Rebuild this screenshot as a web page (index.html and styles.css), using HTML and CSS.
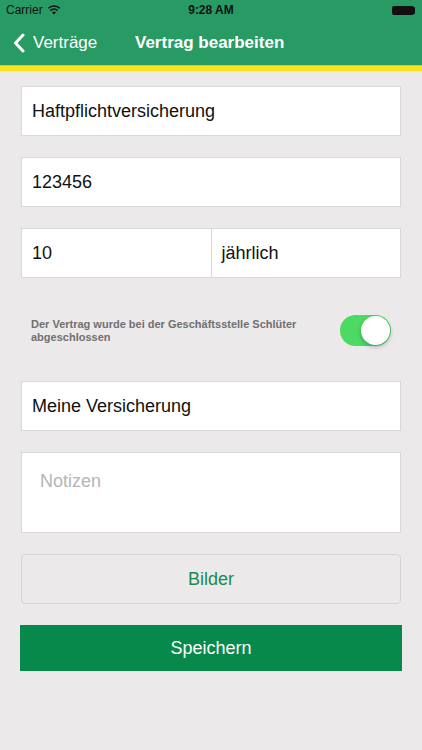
FILE: index.html
```html
<!DOCTYPE html>
<html lang="de">
<head>
  <meta charset="UTF-8">
  <title>Vertrag bearbeiten</title>
  <meta name="viewport" content="width=device-width, initial-scale=1">
  <link rel="stylesheet" href="styles.css">
</head>
<body>

<div class="header">
  <div class="statusbar">
    <div class="carrier">Carrier
      <svg class="wifi" width="14" height="10" viewBox="0 0 14 10">
        <path d="M7 9.5 L5 7.3 A3 3 0 0 1 9 7.3 Z" fill="#111"/>
        <path d="M3.4 5.6 A5.2 5.2 0 0 1 10.6 5.6" stroke="#111" stroke-width="1.6" fill="none"/>
        <path d="M1.2 3.3 A8.3 8.3 0 0 1 12.8 3.3" stroke="#111" stroke-width="1.6" fill="none"/>
      </svg>
    </div>
    <div class="time">9:28 AM</div>
    <div class="battery"><span></span></div>
  </div>
  <div class="navbar">
    <div class="back">
      <svg width="12" height="20" viewBox="0 0 12 20">
        <path d="M10 2 L2.5 10 L10 18" stroke="#fff" stroke-width="3" fill="none" stroke-linecap="round" stroke-linejoin="round"/>
      </svg>
      Verträge
    </div>
    <div class="title">Vertrag bearbeiten</div>
  </div>
</div>
<div class="stripe"></div>

<div class="form">
  <div class="field">Haftpflichtversicherung</div>
  <div class="field">123456</div>
  <div class="field-row">
    <div class="field">10</div>
    <div class="field">jährlich</div>
  </div>

  <div class="switch-row">
    <p>Der Vertrag wurde bei der Geschäftsstelle Schlüter abgeschlossen</p>
    <div class="switch"><span></span></div>
  </div>

  <div class="field">Meine Versicherung</div>
  <div class="field notes">Notizen</div>

  <div class="btn-light">Bilder</div>
  <div class="btn">Speichern</div>
</div>

</body>
</html>
```

FILE: styles.css
```css
body {
  margin: 0;
  font-family: 'Liberation Sans', Arial, sans-serif;
  background: #ebe9ea;
  color: #111;
}

.header {
  background: #289a64;
  color: white;
  height: 65px;
}

.statusbar {
  height: 20px;
  display: flex;
  align-items: center;
  justify-content: space-between;
  padding: 0 6px;
  font-size: 12px;
  color: #111;
}

.carrier {
  display: flex;
  align-items: center;
  gap: 4px;
  width: 120px;
}

.time {
  font-weight: bold;
}

.battery {
  width: 120px;
  display: flex;
  justify-content: flex-end;
}

.battery span {
  display: block;
  width: 22px;
  height: 9px;
  background: #111;
  border-radius: 2px;
  margin-right: 2px;
  box-shadow: 2px 0 0 -1px #111;
}

.navbar {
  height: 45px;
  display: flex;
  align-items: center;
  padding-left: 13px;
  font-size: 17px;
}

.back {
  display: flex;
  align-items: center;
  gap: 8px;
  width: 122px;
}

.title {
  font-weight: bold;
}

.stripe {
  height: 5px;
  background: #fae31a;
  border-top: 1px solid #c9d52d;
}

.form {
  padding: 15px 21px 40px;
}

.field {
  background: white;
  border: 1px solid #d9d7d8;
  height: 48px;
  line-height: 48px;
  padding: 0 10px;
  font-size: 18px;
  margin-bottom: 21px;
}

.field-row {
  display: flex;
}

.field-row .field {
  flex: 1;
}

.field-row .field + .field {
  border-left: none;
}

.switch-row {
  display: flex;
  align-items: center;
  justify-content: space-between;
  padding: 16px 10px 35px 10px;
}

.switch-row p {
  margin: 0;
  font-size: 11px;
  font-weight: bold;
  color: #707070;
  line-height: 13px;
  max-width: 280px;
}

.switch {
  width: 51px;
  height: 31px;
  border-radius: 16px;
  background: #4cd964;
  position: relative;
  flex-shrink: 0;
}

.switch span {
  position: absolute;
  right: 1px;
  top: 1px;
  width: 29px;
  height: 29px;
  border-radius: 50%;
  background: white;
  box-shadow: 0 2px 4px rgba(0,0,0,0.25);
}

.notes {
  height: 79px;
  line-height: 57px;
  color: #b5b5b5;
  padding-left: 18px;
}

.btn-light {
  border: 1px solid #d6d4d5;
  border-radius: 4px;
  height: 48px;
  line-height: 48px;
  text-align: center;
  color: #1d8a4c;
  font-size: 18px;
  margin-bottom: 21px;
}

.btn {
  background: #07894b;
  color: white;
  height: 46px;
  line-height: 46px;
  text-align: center;
  font-size: 18px;
  margin: 0 -1px;
}
```
